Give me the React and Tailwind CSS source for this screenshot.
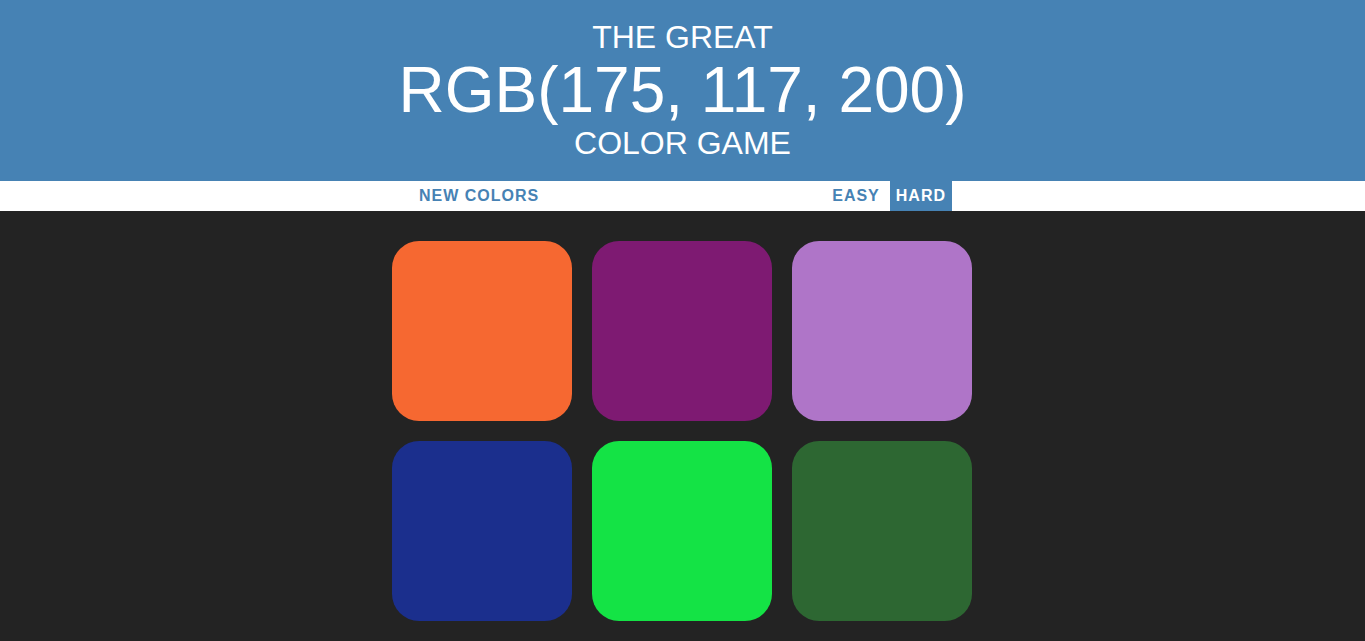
import React, { useState } from 'react'

const squares = [
    '#f66831',
    '#7e1a72',
    '#af75c8',
    '#1b2f8d',
    '#14e345',
    '#2d6732',
]

const App = () => {

    const [mode, setMode] = useState('hard')

    const btn = 'h-full px-[6px] uppercase font-bold tracking-[1px] text-[16px] cursor-pointer'

    return (
        <div className="min-h-screen bg-[#232323] font-['Liberation_Sans',Arial,sans-serif]">

            <h1 className="bg-[#4682b4] text-white text-center uppercase font-normal text-[32px] leading-[1.1] py-5">
                the great
                <br />
                <span className="text-[64px] leading-[1.1]">RGB(175, 117, 200)</span>
                <br />
                color game
            </h1>

            <div className="bg-white h-[30px] flex justify-center gap-[4px]">
                <button className={btn + ' text-[#4682b4] bg-white'}>New Colors</button>
                <span className="w-[20%]"></span>
                <button
                    className={btn + (mode === 'easy' ? ' bg-[#4682b4] text-white' : ' bg-white text-[#4682b4]')}
                    onClick={() => setMode('easy')}
                >Easy</button>
                <button
                    className={btn + (mode === 'hard' ? ' bg-[#4682b4] text-white' : ' bg-white text-[#4682b4]')}
                    onClick={() => setMode('hard')}
                >Hard</button>
            </div>

            <div className="w-[601px] mx-auto my-5 grid grid-cols-[repeat(3,200px)]">
                {squares.map((c, i) => (
                    <div key={i} className="m-[10px] w-[180px] h-[180px] rounded-[27px]" style={{ background: c }} />
                ))}
            </div>

        </div>
    )
}

export default App
